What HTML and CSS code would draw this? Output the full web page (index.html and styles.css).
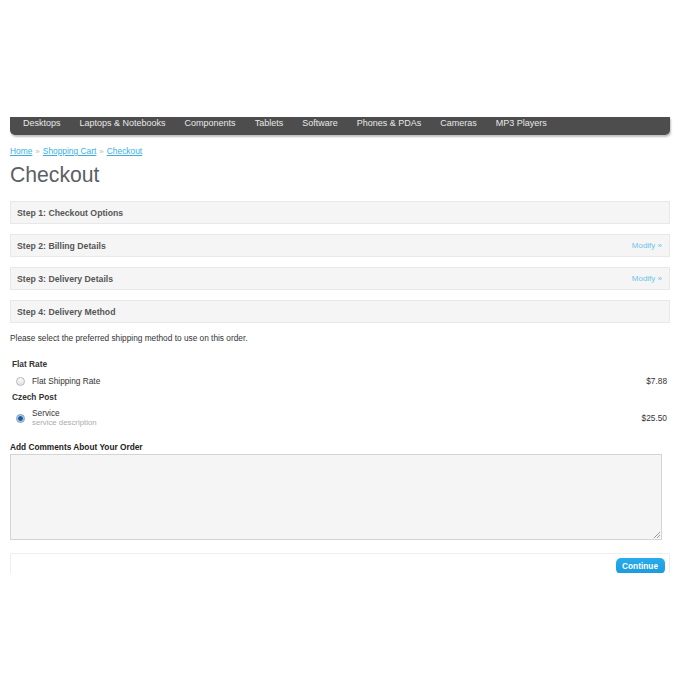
FILE: index.html
```html
<!DOCTYPE html>
<html>
<head>
<meta charset="utf-8">
<link rel="stylesheet" href="styles.css">
</head>
<body>
<div class="viewport">
  <div class="page">
    <nav class="menu">
      <a>Desktops</a>
      <a>Laptops &amp; Notebooks</a>
      <a>Components</a>
      <a>Tablets</a>
      <a>Software</a>
      <a>Phones &amp; PDAs</a>
      <a>Cameras</a>
      <a>MP3 Players</a>
    </nav>
    <div class="breadcrumb">
      <a href="#">Home</a><span class="sep">»</span><a href="#">Shopping Cart</a><span class="sep">»</span><a href="#">Checkout</a>
    </div>
    <h1 class="title">Checkout</h1>
    <div class="steps">
      <div class="step"><span>Step 1: Checkout Options</span></div>
      <div class="step"><span>Step 2: Billing Details</span><a class="modify">Modify »</a></div>
      <div class="step"><span>Step 3: Delivery Details</span><a class="modify">Modify »</a></div>
      <div class="step"><span>Step 4: Delivery Method</span></div>
    </div>
    <p class="intro">Please select the preferred shipping method to use on this order.</p>
    <div class="methods">
      <div class="group-title">Flat Rate</div>
      <div class="method">
        <span class="radio"></span>
        <div class="mtext"><div>Flat Shipping Rate</div></div>
        <div class="price">$7.88</div>
      </div>
      <div class="group-title">Czech Post</div>
      <div class="method">
        <span class="radio checked"></span>
        <div class="mtext"><div>Service</div><div class="desc">service description</div></div>
        <div class="price">$25.50</div>
      </div>
    </div>
    <div class="comments-label">Add Comments About Your Order</div>
    <div class="textarea"><span class="grip"></span></div>
    <div class="buttons">
      <a class="btn">Continue</a>
    </div>
  </div>
</div>
</body>
</html>
```
FILE: styles.css
```css
html, body { margin: 0; padding: 0; background: #fff; }
body { font-family: "Liberation Sans", Arial, sans-serif; color: #333; }
.viewport { padding-top: 117px; }
.page { height: 456px; overflow: hidden; padding: 0 20px 0 10px; }
.menu {
  display: flex; height: 18px; align-items: flex-start;
  background: #4d4d4d; border-radius: 0 0 5px 5px;
  box-shadow: 1px 2px 2px rgba(0,0,0,0.25);
  padding-left: 3.5px; padding-top: 1px; box-sizing: border-box;
}
.menu a { color: #e8e8e8; font-size: 9px; line-height: 11px; padding: 0 9.5px; white-space: nowrap; }
.breadcrumb { margin-top: 11px; font-size: 8.4px; color: #aaa; height: 10px; }
.breadcrumb a { color: #38b0e3; text-decoration: underline; }
.breadcrumb .sep { margin: 0 3px; font-size: 8px; color: #bbb; }
.title { margin: 6px 0 0; font-size: 21.2px; font-weight: normal; color: #5c6066; line-height: 25px; height: 25px; }
.steps { margin-top: 14px; display: flex; flex-direction: column; gap: 10px; }
.step {
  display: flex; justify-content: space-between; align-items: center;
  height: 21px; background: #f5f5f5; border: 1px solid #e8e8e8;
  padding: 0 7px 0 6px; font-size: 8.7px; font-weight: bold; color: #555;
}
.step .modify { color: #6ec3ea; font-weight: normal; font-size: 8px; }
.intro { margin: 10px 0 0; font-size: 8.3px; line-height: 10px; color: #333; }
.methods { margin-top: 16px; padding: 0 3px 0 2px; }
.group-title { font-size: 8.3px; font-weight: bold; color: #333; height: 11px; line-height: 11px; margin-bottom: 6px; }
.method { display: flex; align-items: center; font-size: 8.3px; color: #333; margin-bottom: 6px; }
.method .radio {
  width: 7px; height: 7px; border-radius: 50%; border: 1px solid #b8b8b8;
  background: linear-gradient(#fdfdfd, #e2e2e2); margin: 0 7px 0 4px; flex: none;
}
.method .radio.checked {
  background: radial-gradient(circle, #1d5c99 0 2px, #8fb9de 2.5px, #dde9f4 4px);
  border-color: #7b9cbf;
}
.mtext { flex: 1; line-height: 9px; }
.mtext .desc { color: #aaa; font-size: 7.8px; }
.price { text-align: right; }
.comments-label { margin-top: 15px; font-size: 8.3px; font-weight: bold; color: #222; line-height: 10px; }
.textarea {
  margin-top: 2px; height: 84px; width: 650px; background: #f5f5f5;
  border: 1px solid #d4d4d4; position: relative;
}
.grip {
  position: absolute; right: 1px; bottom: 1px; width: 6px; height: 6px;
  background: linear-gradient(135deg, transparent 45%, #999 45% 55%, transparent 55% 70%, #999 70% 80%, transparent 80%);
}
.buttons {
  margin-top: 13px; height: 40px; border: 1px solid #eee; border-radius: 2px;
  display: flex; justify-content: flex-end; padding: 4px 4px 0 0;
}
.btn {
  height: 16px; line-height: 16px; padding: 0 7px 0 6px; background: linear-gradient(#2aabeb, #1a9bdd);
  color: #fff; font-weight: bold; font-size: 8.3px; border-radius: 5px;
}
```
